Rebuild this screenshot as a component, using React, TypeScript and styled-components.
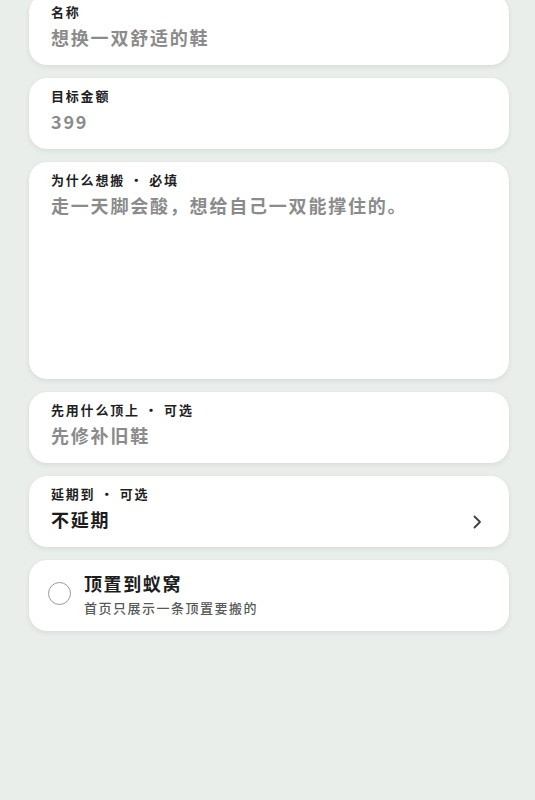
import React from "react";
import styled, { createGlobalStyle } from "styled-components";

const GlobalStyle = createGlobalStyle`
  html, body {
    margin: 0;
    padding: 0;
    background: #e9eeea;
  }
  body {
    font-family: "Noto Sans CJK SC", "Noto Sans", sans-serif;
    -webkit-font-smoothing: antialiased;
  }
`;

const Page = styled.div`
  width: 535px;
  height: 800px;
  overflow: hidden;
  background: #e9eeea;
  box-sizing: border-box;
  padding: 0 26px 0 29px;
`;

const List = styled.div`
  display: flex;
  flex-direction: column;
  gap: 13px;
  margin-top: -6px;
`;

const Card = styled.div<{ $tall?: boolean }>`
  background: #ffffff;
  border-radius: 18px;
  box-shadow: 0 2px 5px rgba(60, 70, 62, 0.09), 0 0 1px rgba(60, 70, 62, 0.08);
  box-sizing: border-box;
  padding: 10px 20px 16px 22px;
  height: ${(p) => (p.$tall ? "217px" : "71px")};
  display: flex;
  flex-direction: column;
  gap: 5px;
`;

const Label = styled.div`
  font-size: 13px;
  line-height: 16px;
  font-weight: 700;
  color: #1f1f1f;
  letter-spacing: 1.8px;
`;

const Value = styled.div<{ $dark?: boolean }>`
  font-size: 18px;
  line-height: 24px;
  font-weight: ${(p) => (p.$dark ? 700 : 600)};
  color: ${(p) => (p.$dark ? "#1c1c1c" : "#8b8b8b")};
  letter-spacing: 1.8px;
`;

const SelectRow = styled.div`
  display: flex;
  align-items: center;
  justify-content: space-between;
`;

const Chevron = styled.svg`
  width: 14px;
  height: 14px;
  margin-right: 5px;
  margin-top: 6px;
`;

const ToggleCard = styled.div`
  background: #ffffff;
  border-radius: 18px;
  box-shadow: 0 2px 5px rgba(60, 70, 62, 0.09), 0 0 1px rgba(60, 70, 62, 0.08);
  box-sizing: border-box;
  height: 71px;
  padding: 0 20px 3px 19px;
  display: flex;
  align-items: center;
  gap: 13px;
`;

const Radio = styled.div`
  width: 23px;
  height: 23px;
  border-radius: 50%;
  border: 1.3px solid #9a9a9a;
  box-sizing: border-box;
  flex-shrink: 0;
  margin-bottom: 2px;
`;

const ToggleText = styled.div`
  display: flex;
  flex-direction: column;
  gap: 5px;
`;

const ToggleTitle = styled.div`
  font-size: 18px;
  line-height: 22px;
  font-weight: 700;
  color: #1c1c1c;
  letter-spacing: 1.6px;
`;

const ToggleSub = styled.div`
  font-size: 13px;
  line-height: 17px;
  font-weight: 500;
  color: #555a56;
  letter-spacing: 1.5px;
`;

export default function App() {
  return (
    <>
      <GlobalStyle />
      <Page>
        <List>
          <Card>
            <Label>名称</Label>
            <Value>想换一双舒适的鞋</Value>
          </Card>
          <Card>
            <Label>目标金额</Label>
            <Value>399</Value>
          </Card>
          <Card $tall>
            <Label>为什么想搬 · 必填</Label>
            <Value>走一天脚会酸，想给自己一双能撑住的。</Value>
          </Card>
          <Card>
            <Label>先用什么顶上 · 可选</Label>
            <Value>先修补旧鞋</Value>
          </Card>
          <Card>
            <Label>延期到 · 可选</Label>
            <SelectRow>
              <Value $dark>不延期</Value>
              <Chevron viewBox="0 0 14 14" fill="none">
                <path
                  d="M4.5 1.5 L10 7 L4.5 12.5"
                  stroke="#3f3f3f"
                  strokeWidth="1.8"
                  strokeLinecap="round"
                  strokeLinejoin="round"
                />
              </Chevron>
            </SelectRow>
          </Card>
          <ToggleCard>
            <Radio />
            <ToggleText>
              <ToggleTitle>顶置到蚁窝</ToggleTitle>
              <ToggleSub>首页只展示一条顶置要搬的</ToggleSub>
            </ToggleText>
          </ToggleCard>
        </List>
      </Page>
    </>
  );
}
